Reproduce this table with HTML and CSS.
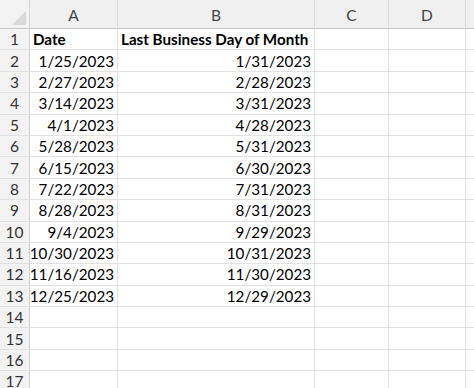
FILE: index.html
```html
<!DOCTYPE html>
<html>
<head>
<meta charset="utf-8">
<link rel="stylesheet" href="styles.css">
</head>
<body>
<div class="sheet">
  <div class="corner"><svg class="tri" width="14" height="14" viewBox="0 0 14 14"><polygon points="14,0 14,14 0,14" fill="#d9d9d9"/></svg></div>
  <div class="ch">A</div><div class="ch">B</div><div class="ch">C</div><div class="ch">D</div><div class="ch last"></div>

  <div class="rh">1</div><div class="c b">Date</div><div class="c b">Last Business Day of Month</div><div class="c"></div><div class="c"></div><div class="c last"></div>
  <div class="rh">2</div><div class="c r">1/25/2023</div><div class="c r">1/31/2023</div><div class="c"></div><div class="c"></div><div class="c last"></div>
  <div class="rh">3</div><div class="c r">2/27/2023</div><div class="c r">2/28/2023</div><div class="c"></div><div class="c"></div><div class="c last"></div>
  <div class="rh">4</div><div class="c r">3/14/2023</div><div class="c r">3/31/2023</div><div class="c"></div><div class="c"></div><div class="c last"></div>
  <div class="rh">5</div><div class="c r">4/1/2023</div><div class="c r">4/28/2023</div><div class="c"></div><div class="c"></div><div class="c last"></div>
  <div class="rh">6</div><div class="c r">5/28/2023</div><div class="c r">5/31/2023</div><div class="c"></div><div class="c"></div><div class="c last"></div>
  <div class="rh">7</div><div class="c r">6/15/2023</div><div class="c r">6/30/2023</div><div class="c"></div><div class="c"></div><div class="c last"></div>
  <div class="rh">8</div><div class="c r">7/22/2023</div><div class="c r">7/31/2023</div><div class="c"></div><div class="c"></div><div class="c last"></div>
  <div class="rh">9</div><div class="c r">8/28/2023</div><div class="c r">8/31/2023</div><div class="c"></div><div class="c"></div><div class="c last"></div>
  <div class="rh">10</div><div class="c r">9/4/2023</div><div class="c r">9/29/2023</div><div class="c"></div><div class="c"></div><div class="c last"></div>
  <div class="rh">11</div><div class="c r">10/30/2023</div><div class="c r">10/31/2023</div><div class="c"></div><div class="c"></div><div class="c last"></div>
  <div class="rh">12</div><div class="c r">11/16/2023</div><div class="c r">11/30/2023</div><div class="c"></div><div class="c"></div><div class="c last"></div>
  <div class="rh">13</div><div class="c r">12/25/2023</div><div class="c r">12/29/2023</div><div class="c"></div><div class="c"></div><div class="c last"></div>
  <div class="rh">14</div><div class="c"></div><div class="c"></div><div class="c"></div><div class="c"></div><div class="c last"></div>
  <div class="rh">15</div><div class="c"></div><div class="c"></div><div class="c"></div><div class="c"></div><div class="c last"></div>
  <div class="rh">16</div><div class="c"></div><div class="c"></div><div class="c"></div><div class="c"></div><div class="c last"></div>
  <div class="rh">17</div><div class="c"></div><div class="c"></div><div class="c"></div><div class="c"></div><div class="c last"></div>
</div>
</body>
</html>
```

FILE: styles.css
```css
html, body {
  margin: 0;
  padding: 0;
  background: #ffffff;
  overflow: hidden;
}
.sheet {
  display: grid;
  grid-template-columns: 30px 88px 197px 74px 77px 8px;
  grid-template-rows: 29px repeat(17, 21.4px);
  width: 474px;
  font-family: Lato, "Open Sans", sans-serif;
  font-size: 15.2px;
  font-variant-numeric: tabular-nums;
  color: #000;
}
.corner {
  position: relative;
  background: #f3f3f3;
  border-right: 1px solid #d6d6d6;
  border-bottom: 1px solid #c8c8c8;
}
.tri {
  position: absolute;
  right: 3px;
  bottom: 3px;
}
.ch {
  background: #f0f0f0;
  border-right: 1px solid #dcdcdc;
  border-bottom: 1px solid #c4c4c4;
  color: #444;
  font-size: 15.5px;
  display: flex;
  align-items: center;
  justify-content: center;
  padding-top: 2px;
}
.ch.last { border-right: none; }
.rh {
  background: #f3f3f3;
  border-right: 1px solid #d0d0d0;
  border-bottom: 1px solid #e2e2e2;
  color: #333;
  font-size: 15.5px;
  display: flex;
  align-items: center;
  justify-content: center;
}
.c {
  border-right: 1px solid #e2e2e2;
  border-bottom: 1px solid #e2e2e2;
  display: flex;
  align-items: center;
  padding: 0 3px;
  white-space: nowrap;
  overflow: visible;
}
.c.last { border-right: none; }
.b { font-weight: 700; }
.r { justify-content: flex-end; }
```
